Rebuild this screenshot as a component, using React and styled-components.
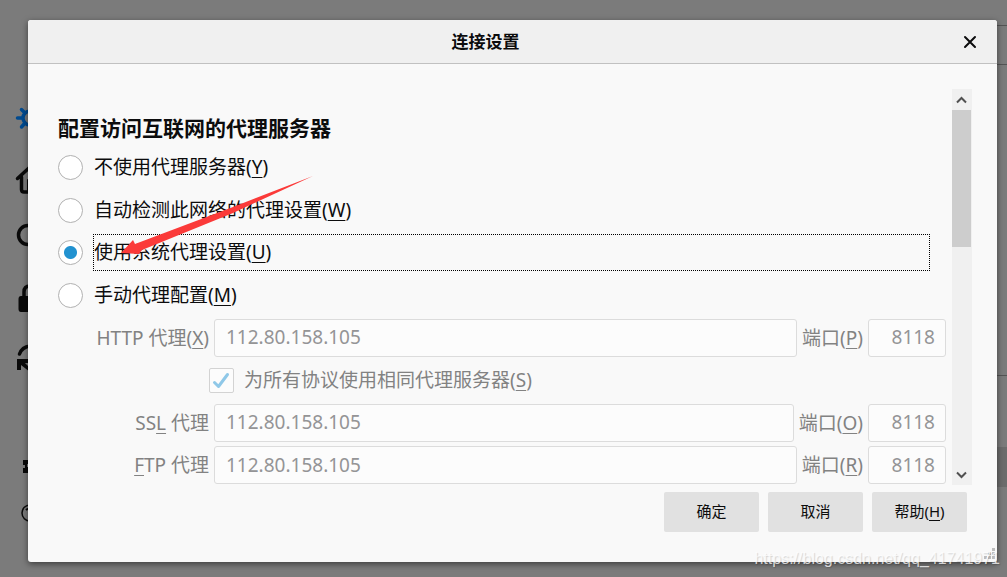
import React, { useState } from 'react'
import styled, { createGlobalStyle } from 'styled-components'

const GlobalStyle = createGlobalStyle`
  * {
    box-sizing: border-box;
  }

  body {
    margin: 0;
    background: #7b7b7b;
    color: #0c0c0d;
    font-family: "Noto Sans", "Noto Sans CJK SC", sans-serif;
    font-size: 19px;
    line-height: 28px;
  }
`

const Page = styled.div`
  position: relative;
  display: flex;
  min-height: 100vh;
  padding: 20px 10px 15px 28px;
  overflow: hidden;
`

const Backdrop = styled.svg`
  position: absolute;
  top: 0;
  left: ${({ $side }) => ($side === 'left' ? '0' : 'auto')};
  right: ${({ $side }) => ($side === 'right' ? '0' : 'auto')};
`

const Dialog = styled.section`
  position: relative;
  flex: 1;
  min-width: 0;
  display: flex;
  flex-direction: column;
  background: #f9f9f9;
  border-radius: 3px;
  box-shadow: 0 2px 6px rgba(0, 0, 0, 0.5);
`

const TitleBar = styled.header`
  display: grid;
  grid-template-columns: 40px 1fr 40px;
  align-items: center;
  height: 44px;
  padding: 0 8px;
  background: #f0f0f0;
  border-bottom: 1px solid #c1c1c1;
  border-radius: 3px 3px 0 0;
`

const Title = styled.h1`
  grid-column: 2;
  margin: 0 0 0 -54px;
  font-size: 17px;
  font-weight: 700;
  text-align: center;
`

const CloseButton = styled.button`
  display: flex;
  align-items: center;
  justify-content: center;
  height: 32px;
  padding: 0;
  border: 0;
  background: none;
`

const ScrollArea = styled.div`
  display: flex;
  height: 396px;
  margin: 25px 25px 0 30px;
`

const Form = styled.form`
  flex: 1;
  min-width: 0;
  padding: 23px 6px 0 0;
  overflow: hidden;
`

const Heading = styled.h2`
  margin: 0 0 2px;
  font-size: 21px;
  line-height: 32px;
  font-weight: 700;
`

const Rows = styled.div`
  display: grid;
  grid-template-rows: repeat(4, 43px 42px);
  align-items: center;
`

const RadioRow = styled.div`
  display: flex;
  align-items: center;
  gap: 10px;
  padding-right: 16px;
`

const Radio = styled.input`
  appearance: none;
  flex: none;
  width: 25px;
  height: 25px;
  margin: 0;
  border: 1px solid #b1b1b1;
  border-radius: 50%;
  background: #fff;

  &:checked {
    background: radial-gradient(circle, #2292d0 6px, #fff 7px);
  }
`

const RadioLabel = styled.label`
  flex: 1;
  padding: 3px 0 4px;
  border: 1px dotted ${({ $focused }) => ($focused ? '#000' : 'transparent')};
`

const FieldRow = styled.div`
  display: grid;
  grid-template-columns: 151px 1fr auto 78px;
  align-items: center;
  column-gap: 5px;
  color: #828282;
`

const FieldLabel = styled.label`
  text-align: right;
  white-space: nowrap;
`

const TextBox = styled.input`
  width: 100%;
  min-width: 0;
  height: 38px;
  padding: 0 10px 1px 11px;
  border: 1px solid #dcdcdc;
  border-radius: 3px;
  background: #fcfcfc;
  color: #949496;
  font: inherit;
  text-align: ${({ $align }) => $align || 'left'};
`

const CheckRow = styled.div`
  display: flex;
  align-items: center;
  gap: 10px;
  padding-left: 151px;
  color: #828282;
`

const CheckHolder = styled.span`
  display: grid;
  width: 25px;
  height: 25px;

  > * {
    grid-area: 1 / 1;
  }
`

const CheckBox = styled.input`
  appearance: none;
  width: 25px;
  height: 25px;
  margin: 0;
  border: 1px solid #d3d3d3;
  border-radius: 2px;
  background: #fcfcfc;
`

const ScrollBar = styled.div`
  display: flex;
  flex-direction: column;
  width: 20px;
  background: #f0f0f0;
`

const ScrollButton = styled.button`
  display: flex;
  align-items: center;
  justify-content: center;
  height: 21px;
  padding: 0;
  border: 0;
  background: none;
`

const ScrollTrack = styled.div`
  flex: 1;
`

const ScrollThumb = styled.div`
  width: 19px;
  height: 137px;
  background: #cdcdcd;
`

const Footer = styled.footer`
  display: flex;
  justify-content: flex-end;
  gap: 9px;
  padding: 7px 30px 30px;
`

const Button = styled.button`
  width: 95px;
  height: 40px;
  padding: 0 0 2px;
  border: 0;
  border-radius: 2px;
  background: #e1e1e1;
  color: #0c0c0d;
  font: inherit;
  font-size: 15px;
`

const Key = styled.span`
  text-decoration: underline;
  text-decoration-thickness: 1px;
  text-underline-offset: 3px;
`

const Grip = styled.svg`
  position: absolute;
  right: 2px;
  bottom: 2px;
`

const ArrowMark = styled.svg`
  position: absolute;
  top: 154px;
  left: 90px;
  pointer-events: none;
`

const Watermark = styled.span`
  position: absolute;
  right: 7px;
  bottom: 8px;
  color: rgba(255, 255, 255, 0.75);
  font-family: "Liberation Sans", sans-serif;
  font-size: 16px;
  line-height: 20px;
  text-shadow: 1px 1px 1px rgba(0, 0, 0, 0.15);
`

const modes = [
  { id: 'none', text: '不使用代理服务器', accessKey: 'Y' },
  { id: 'detect', text: '自动检测此网络的代理设置', accessKey: 'W' },
  { id: 'system', text: '使用系统代理设置', accessKey: 'U' },
  { id: 'manual', text: '手动代理配置', accessKey: 'M' },
]

const ProxyFields = ({ id, label, portKey }) => (
  <FieldRow>
    <FieldLabel htmlFor={id}>{label}</FieldLabel>
    <TextBox id={id} type="text" defaultValue="112.80.158.105" disabled />
    <FieldLabel htmlFor={`${id}-port`}>端口(<Key>{portKey}</Key>)</FieldLabel>
    <TextBox id={`${id}-port`} type="text" defaultValue="8118" $align="right" disabled />
  </FieldRow>
)

const SidebarIcons = () => (
  <Backdrop $side="left" width="40" height="577" fill="none" aria-hidden="true">
    <g stroke="#004a8f" strokeLinecap="round">
      <circle cx="30" cy="118" r="7" strokeWidth="3.5" />
      <path d="M17.5 118H22M21.5 109.500L25 113M21.500 127L25 123" strokeWidth="3.5" />
    </g>
    <g stroke="#0a0a0a" strokeWidth="3.5" strokeLinecap="round" strokeLinejoin="round">
      <path d="M17.5 178.5L30 167M21.5 177V189.5Q21.5 192 24 192H30" />
      <path d="M28 180V192" strokeWidth="2" />
      <circle cx="28" cy="235" r="9.5" />
      <path d="M24 298V292Q24 286 30 286" />
      <path d="M19.5 354Q22 347 30 346" />
    </g>
    <path d="M21 296H32V312H21Q18.5 312 18.5 309V299Q18.5 296 21 296Z" fill="#0a0a0a" />
    <path d="M17 359H30V363H25L30 368V372L21 365V370H17Z" fill="#0a0a0a" />
    <path d="M23 460H30V464H27V467H30V473H23V468H25V465H23Z" fill="#0a0a0a" />
    <circle cx="30" cy="513" r="8" stroke="#0a0a0a" strokeWidth="1.5" />
    <path d="M26 510Q28 508 30 509" stroke="#0a0a0a" strokeWidth="2" />
  </Backdrop>
)

const PageEdge = () => (
  <Backdrop $side="right" width="12" height="577" aria-hidden="true">
    <path d="M0 25.5H12M0 64.5H12M0 375.5H12" stroke="#545454" />
    <rect y="447" width="12" height="40" fill="#6c6c6c" />
  </Backdrop>
)

const App = () => {
  const [mode, setMode] = useState('system')

  return (
    <Page>
      <GlobalStyle />
      <SidebarIcons />
      <PageEdge />
      <Dialog role="dialog" aria-labelledby="dialog-title">
        <TitleBar>
          <Title id="dialog-title">连接设置</Title>
          <CloseButton type="button" aria-label="关闭">
            <svg width="15" height="14" stroke="#0c0c0d" strokeWidth="2" strokeLinecap="round">
              <path d="M3 2L13 12M13 2L3 12" />
            </svg>
          </CloseButton>
        </TitleBar>
        <ScrollArea>
          <Form>
            <Heading>配置访问互联网的代理服务器</Heading>
            <Rows>
              {modes.map(({ id, text, accessKey }) => (
                <RadioRow key={id}>
                  <Radio
                    id={id}
                    type="radio"
                    name="mode"
                    checked={mode === id}
                    onChange={() => setMode(id)}
                  />
                  <RadioLabel htmlFor={id} $focused={mode === id}>
                    {text}(<Key>{accessKey}</Key>)
                  </RadioLabel>
                </RadioRow>
              ))}
              <ProxyFields id="http" label={<>HTTP 代理(<Key>X</Key>)</>} portKey="P" />
              <CheckRow>
                <CheckHolder>
                  <CheckBox id="share" type="checkbox" defaultChecked disabled />
                  <svg width="25" height="25" fill="none" stroke="#8fc8e8" strokeWidth="3" aria-hidden="true">
                    <path d="M5.5 14.5L9.5 18.5L18.5 6.5" strokeLinecap="round" strokeLinejoin="round" />
                  </svg>
                </CheckHolder>
                <label htmlFor="share">为所有协议使用相同代理服务器(<Key>S</Key>)</label>
              </CheckRow>
              <ProxyFields id="ssl" label={<>SS<Key>L</Key> 代理</>} portKey="O" />
              <ProxyFields id="ftp" label={<><Key>F</Key>TP 代理</>} portKey="R" />
            </Rows>
          </Form>
          <ScrollBar>
            <ScrollButton type="button" aria-label="向上滚动">
              <svg width="12" height="8" fill="none" stroke="#505050" strokeWidth="2">
                <path d="M1 6.5L5.5 2L10 6.5" />
              </svg>
            </ScrollButton>
            <ScrollTrack>
              <ScrollThumb />
            </ScrollTrack>
            <ScrollButton type="button" aria-label="向下滚动">
              <svg width="12" height="8" fill="none" stroke="#505050" strokeWidth="2">
                <path d="M1 1.5L5.5 6L10 1.5" />
              </svg>
            </ScrollButton>
          </ScrollBar>
        </ScrollArea>
        <Footer>
          <Button type="button">确定</Button>
          <Button type="button">取消</Button>
          <Button type="button">帮助(<Key>H</Key>)</Button>
        </Footer>
        <Grip width="12" height="12" fill="#bdbdbd" aria-hidden="true">
          <path d="M9 0h3v3H9zM5 4h3v3H5zM9 4h3v3H9zM1 8h3v3H1zM5 8h3v3H5zM9 8h3v3H9z" />
        </Grip>
        <ArrowMark width="200" height="84" aria-hidden="true">
          <path d="M195 2L115 33L17 70L15 66L3 79L21 80L24 76L115 39Z" fill="#fb3a39" />
        </ArrowMark>
      </Dialog>
      <Watermark>https://blog.csdn.net/qq_41741971</Watermark>
    </Page>
  )
}

export default App
